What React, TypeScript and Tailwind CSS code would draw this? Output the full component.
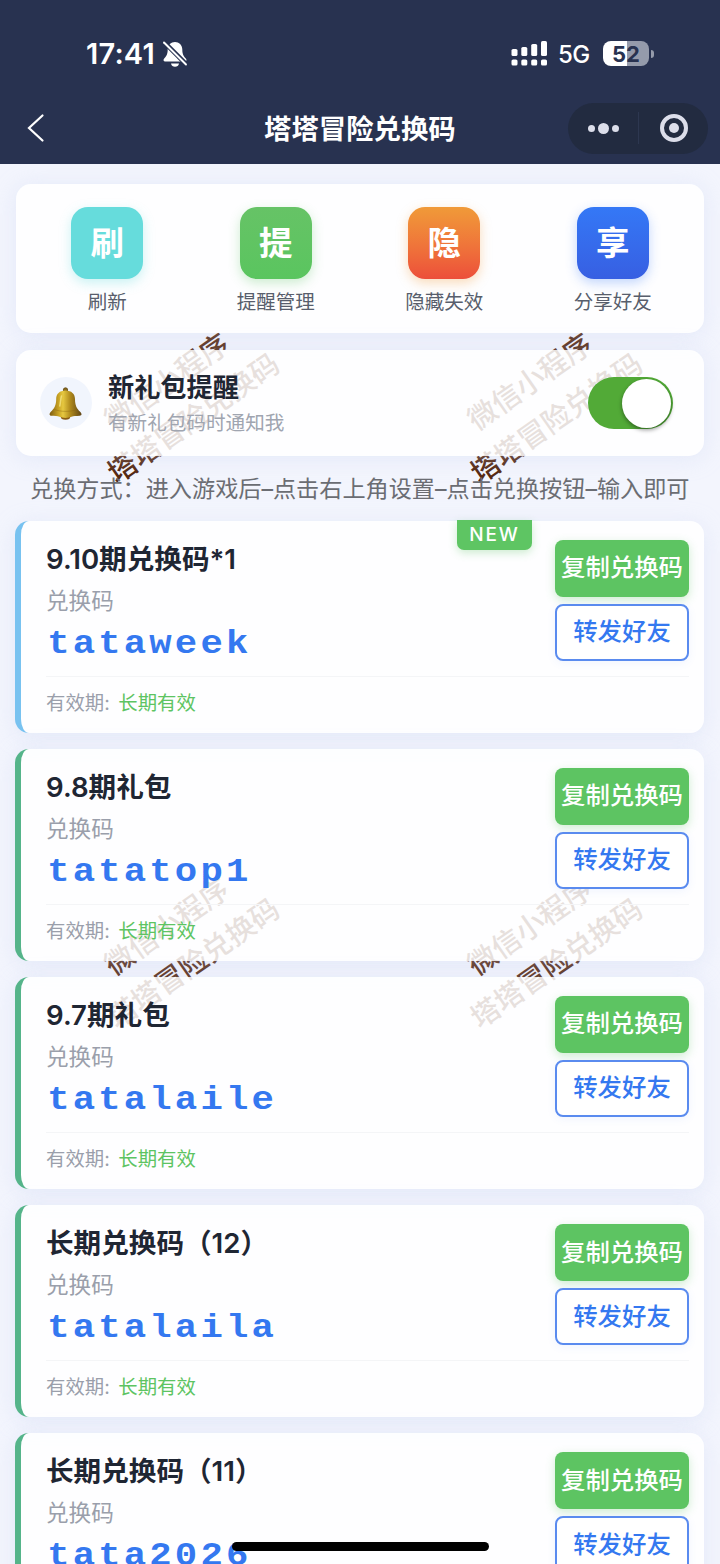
import clsx from 'clsx';

const actions = [
  { glyph: '刷', label: '刷新', tile: 'bg-[#66dcdc] shadow-[0_4px_12px_rgba(102,220,220,.35)]' },
  {
    glyph: '提',
    label: '提醒管理',
    tile: 'bg-gradient-to-b from-[#66c366] to-[#5ac55f] shadow-[0_4px_12px_rgba(90,197,95,.3)]',
  },
  {
    glyph: '隐',
    label: '隐藏失效',
    tile: 'bg-gradient-to-b from-[#f09a38] to-[#ec4e3a] shadow-[0_4px_12px_rgba(240,154,56,.35)]',
  },
  {
    glyph: '享',
    label: '分享好友',
    tile: 'bg-gradient-to-b from-[#3478f6] to-[#375fe2] shadow-[0_4px_12px_rgba(52,120,246,.3)]',
  },
];

const gifts = [
  { title: '9.10期兑换码*1', code: 'tataweek', isNew: true },
  { title: '9.8期礼包', code: 'tatatop1', isNew: false },
  { title: '9.7期礼包', code: 'tatalaile', isNew: false },
  { title: '长期兑换码（12）', code: 'tatalaila', isNew: false },
  { title: '长期兑换码（11）', code: 'tata2026', isNew: false },
];

const watermarks = [
  'left-[80px] top-[356px]',
  'left-[443px] top-[356px]',
  'left-[80px] top-[901px]',
  'left-[443px] top-[901px]',
];

function StatusBar() {
  return (
    <div className="flex h-[92px] items-center pt-[15px] pl-[86px] pr-[66px] text-white">
      <span className="w-[76px] text-[29px] leading-none font-semibold tracking-[0.2px]">17:41</span>
      <svg width="26" height="28" viewBox="0 0 26 28" fill="none">
        <path
          d="M13 2C9 2 5.700 5 5.700 9.500C5.700 14.500 4 16.500 2.200 18.600C1 20 1.400 21.500 3.200 21.500H22.800C24.600 21.500 25 20 23.800 18.600C22 16.500 20.300 14.500 20.300 9.500C20.300 5 17 2 13 2Z"
          fill="#fff"
        />
        <path d="M9 23.500H17C16.600 25.600 15 26.700 13 26.700C11 26.700 9.400 25.600 9 23.500Z" fill="#fff" />
        <path d="M1.500 1.500L25 25" stroke="#283250" strokeWidth="4.600" />
        <path d="M2 2.500L24 24.500" stroke="#fff" strokeWidth="1.900" strokeLinecap="round" />
      </svg>
      <svg className="ml-auto" width="37" height="26" viewBox="0 0 37 26" fill="#fff">
        <rect x="0.500" y="8" width="6" height="7" rx="1.600" />
        <rect x="10.300" y="6" width="6" height="9" rx="1.600" />
        <rect x="20.200" y="3" width="6" height="12" rx="1.600" />
        <rect x="30" y="0" width="6" height="15" rx="1.600" />
        <rect x="0.500" y="18.500" width="6" height="6" rx="1.600" />
        <rect x="10.300" y="18.500" width="6" height="6" rx="1.600" />
        <rect x="20.200" y="18.500" width="6" height="6" rx="1.600" />
        <rect x="30" y="18.500" width="6" height="6" rx="1.600" />
      </svg>
      <span className="ml-[10px] w-[45px] pt-[3px] text-[24px] leading-none font-medium tracking-[-0.5px]">5G</span>
      <div className="flex h-[25px] w-[46px] items-center justify-center rounded-[8px] bg-[linear-gradient(90deg,#fff_52%,#959bab_52%)] text-[22px] leading-none font-bold text-[#283250]">
        52
      </div>
      <div className="ml-[2px] h-[8px] w-[3px] rounded-r-full bg-[#959bab]" />
    </div>
  );
}

function NavBar() {
  return (
    <div className="flex h-[72px] items-center pl-[27px] pr-[12px]">
      <svg width="18" height="30" viewBox="0 0 18 30" fill="none">
        <path d="M15.500 2.500L2 15L15.500 27.500" stroke="#fff" strokeWidth="2.200" strokeLinecap="round" />
      </svg>
      <h1 className="mt-[3px] ml-[219px] text-[27.400px] leading-none font-semibold text-white">塔塔冒险兑换码</h1>
      <div className="ml-auto flex h-[51px] w-[140px] items-center rounded-full bg-[#222b40]">
        <div className="flex w-[70px] items-center justify-center gap-[3px]">
          <span className="size-[7px] rounded-full bg-[#dcdeea]" />
          <span className="size-[11px] rounded-full bg-[#dcdeea]" />
          <span className="size-[7px] rounded-full bg-[#dcdeea]" />
        </div>
        <div className="h-[32px] w-px bg-[#2d3750]" />
        <div className="flex flex-1 justify-center">
          <div className="flex size-[28px] items-center justify-center rounded-full border-4 border-[#dcdeea]">
            <span className="size-[10px] rounded-full bg-[#dcdeea]" />
          </div>
        </div>
      </div>
    </div>
  );
}

function Bell() {
  return (
    <svg width="34" height="34" viewBox="0 0 34 34">
      <defs>
        <linearGradient id="bell" x1="0" x2="1">
          <stop offset="0" stopColor="#7d5c12" />
          <stop offset=".28" stopColor="#c9a324" />
          <stop offset=".42" stopColor="#e6c840" />
          <stop offset=".65" stopColor="#b08a1c" />
          <stop offset="1" stopColor="#5f4416" />
        </linearGradient>
      </defs>
      <circle cx="16.500" cy="4" r="2.200" fill="#8a6a1c" stroke="#5f4812" strokeWidth=".8" />
      <ellipse cx="16.500" cy="30.500" rx="4.800" ry="3.200" fill="#8a5c14" />
      <path
        d="M16.500 4.500C10.500 4.500 7.200 8 7.200 13C7.200 19 5.500 22.500 1.600 26C-.2 28 .4 29.400 2.400 29.800C6 30.400 8.500 29.800 10.500 30.800C14 32.300 19 32.300 22.500 30.800C24.500 29.800 27 30.400 30.600 29.800C32.800 29.400 33.200 28 31.400 26C27.500 22.500 26 19 26 13C26 8 22.500 4.500 16.500 4.500Z"
        fill="url(#bell)"
      />
      <path d="M5.500 23.500C12 26 21 26 28 23.500" stroke="#8a6512" strokeWidth=".8" fill="none" opacity=".5" />
      <path d="M12.500 10C11.500 13 11.500 17 10.800 20" stroke="#efdb74" strokeWidth="1.500" strokeLinecap="round" fill="none" />
    </svg>
  );
}

function GiftCard({ title, code, isNew }: { title: string; code: string; isNew: boolean }) {
  return (
    <div
      className={clsx(
        'relative h-[212.600px] shrink-0 rounded-[14px] border-l-[6px] bg-white/86 pl-[25px] pr-[15px] shadow-[0_4px_22px_rgba(200,212,242,.36)]',
        isNew ? 'border-[#78c2f0]' : 'border-[#55b48a]'
      )}
    >
      {isNew && (
        <span className="absolute -top-px right-[172px] flex h-[30px] w-[75px] items-center justify-center rounded-b-[7px] bg-[#5ec563] text-[19px] leading-none font-medium tracking-[1.800px] text-white shadow-[0_3px_8px_rgba(94,197,99,.3)]">
          NEW
        </span>
      )}
      <div className="flex h-[156px] justify-between border-b border-[#f4f5f7]">
        <div className="whitespace-nowrap">
          <h3 className="mt-[19px] text-[27.600px] leading-[38px] font-semibold text-[#1f2633]">{title}</h3>
          <p className="mt-[8px] text-[22.600px] leading-[30px] text-[#9a9fab]">兑换码</p>
          <p className="mt-[9px] origin-left scale-x-[1.130] pl-px font-['Liberation_Mono'] text-[33px] leading-[40px] font-bold tracking-[2.800px] text-[#3478f0]">
            {code}
          </p>
        </div>
        <div className="mt-[19px] flex w-[134px] flex-col gap-[7px] text-[24.400px] font-medium whitespace-nowrap">
          <button className="h-[57px] rounded-[8px] bg-[#5dc462] pb-px leading-none text-white shadow-[0_3px_10px_rgba(93,196,98,.3)]">
            复制兑换码
          </button>
          <button className="h-[57px] rounded-[8px] border-2 border-[#5a8bef] bg-white pb-px leading-none text-[#3478f0] shadow-[0_2px_8px_rgba(74,128,236,.08)]">
            转发好友
          </button>
        </div>
      </div>
      <div className="mt-[12px] flex gap-[8.500px] text-[19.400px] leading-[29px]">
        <span className="text-[#9a9fab]">有效期:</span>
        <span className="text-[#5dc462]">长期有效</span>
      </div>
    </div>
  );
}

export default function App() {
  return (
    <main className="relative flex h-[1564px] w-[720px] flex-col overflow-hidden bg-[#f3f5fd] font-[Inter,'Noto_Sans_CJK_SC',sans-serif]">
      {watermarks.map((place) => (
        <div
          key={place}
          className={clsx(
            'absolute w-[200px] -rotate-35 text-center text-[28.800px] leading-[44.500px] font-medium whitespace-nowrap text-[#54270f]',
            place
          )}
        >
          微信小程序
          <br />
          塔塔冒险兑换码
        </div>
      ))}

      <header className="relative h-[164px] shrink-0 bg-[#283250]">
        <StatusBar />
        <NavBar />
      </header>

      <section className="relative mx-[16px] mt-[20px] grid h-[149px] shrink-0 grid-cols-4 rounded-[15px] bg-white/86 px-[7px] pt-[23px] shadow-[0_2px_22px_rgba(200,212,242,.36)]">
        {actions.map((item) => (
          <div key={item.label} className="flex flex-col items-center">
            <div
              className={clsx(
                'flex size-[72px] items-center justify-center rounded-[17px] pt-[2px] text-[33.500px] leading-none font-bold text-white',
                item.tile
              )}
            >
              {item.glyph}
            </div>
            <span className="mt-[9px] text-[19.500px] leading-[28px] text-[#585e6c]">{item.label}</span>
          </div>
        ))}
      </section>

      <section className="relative mx-[16px] mt-[17px] flex h-[106px] shrink-0 items-center rounded-[15px] bg-white/86 pl-[24px] pr-[31px] shadow-[0_2px_22px_rgba(200,212,242,.36)]">
        <div className="flex size-[52px] items-center justify-center rounded-full bg-[#f1f5fd]">
          <Bell />
        </div>
        <div className="ml-[16px] pt-px">
          <h2 className="text-[26.200px] leading-[38px] font-semibold text-[#1f2633]">新礼包提醒</h2>
          <p className="text-[19.600px] leading-[32px] text-[#a0a5b0]">有新礼包码时通知我</p>
        </div>
        <div className="ml-auto flex h-[52px] w-[85px] items-center justify-end rounded-full bg-[#52aa37] pr-[2px]">
          <span className="size-[49px] rounded-full bg-white shadow-[0_2px_4px_rgba(0,0,0,.4)]" />
        </div>
      </section>

      <p className="relative mt-[17px] ml-[30px] h-[32px] shrink-0 text-[23.150px] leading-[32px] whitespace-nowrap text-[#6b6d73]">
        兑换方式：进入游戏后–点击右上角设置–点击兑换按钮–输入即可
      </p>

      <div className="relative mt-[15.500px] mr-[16px] ml-[15px] flex flex-col gap-[15.500px]">
        {gifts.map((gift) => (
          <GiftCard key={gift.code} {...gift} />
        ))}
      </div>

      <div className="absolute top-[1542px] left-[232px] h-[9px] w-[257px] rounded-full bg-black" />
    </main>
  );
}
